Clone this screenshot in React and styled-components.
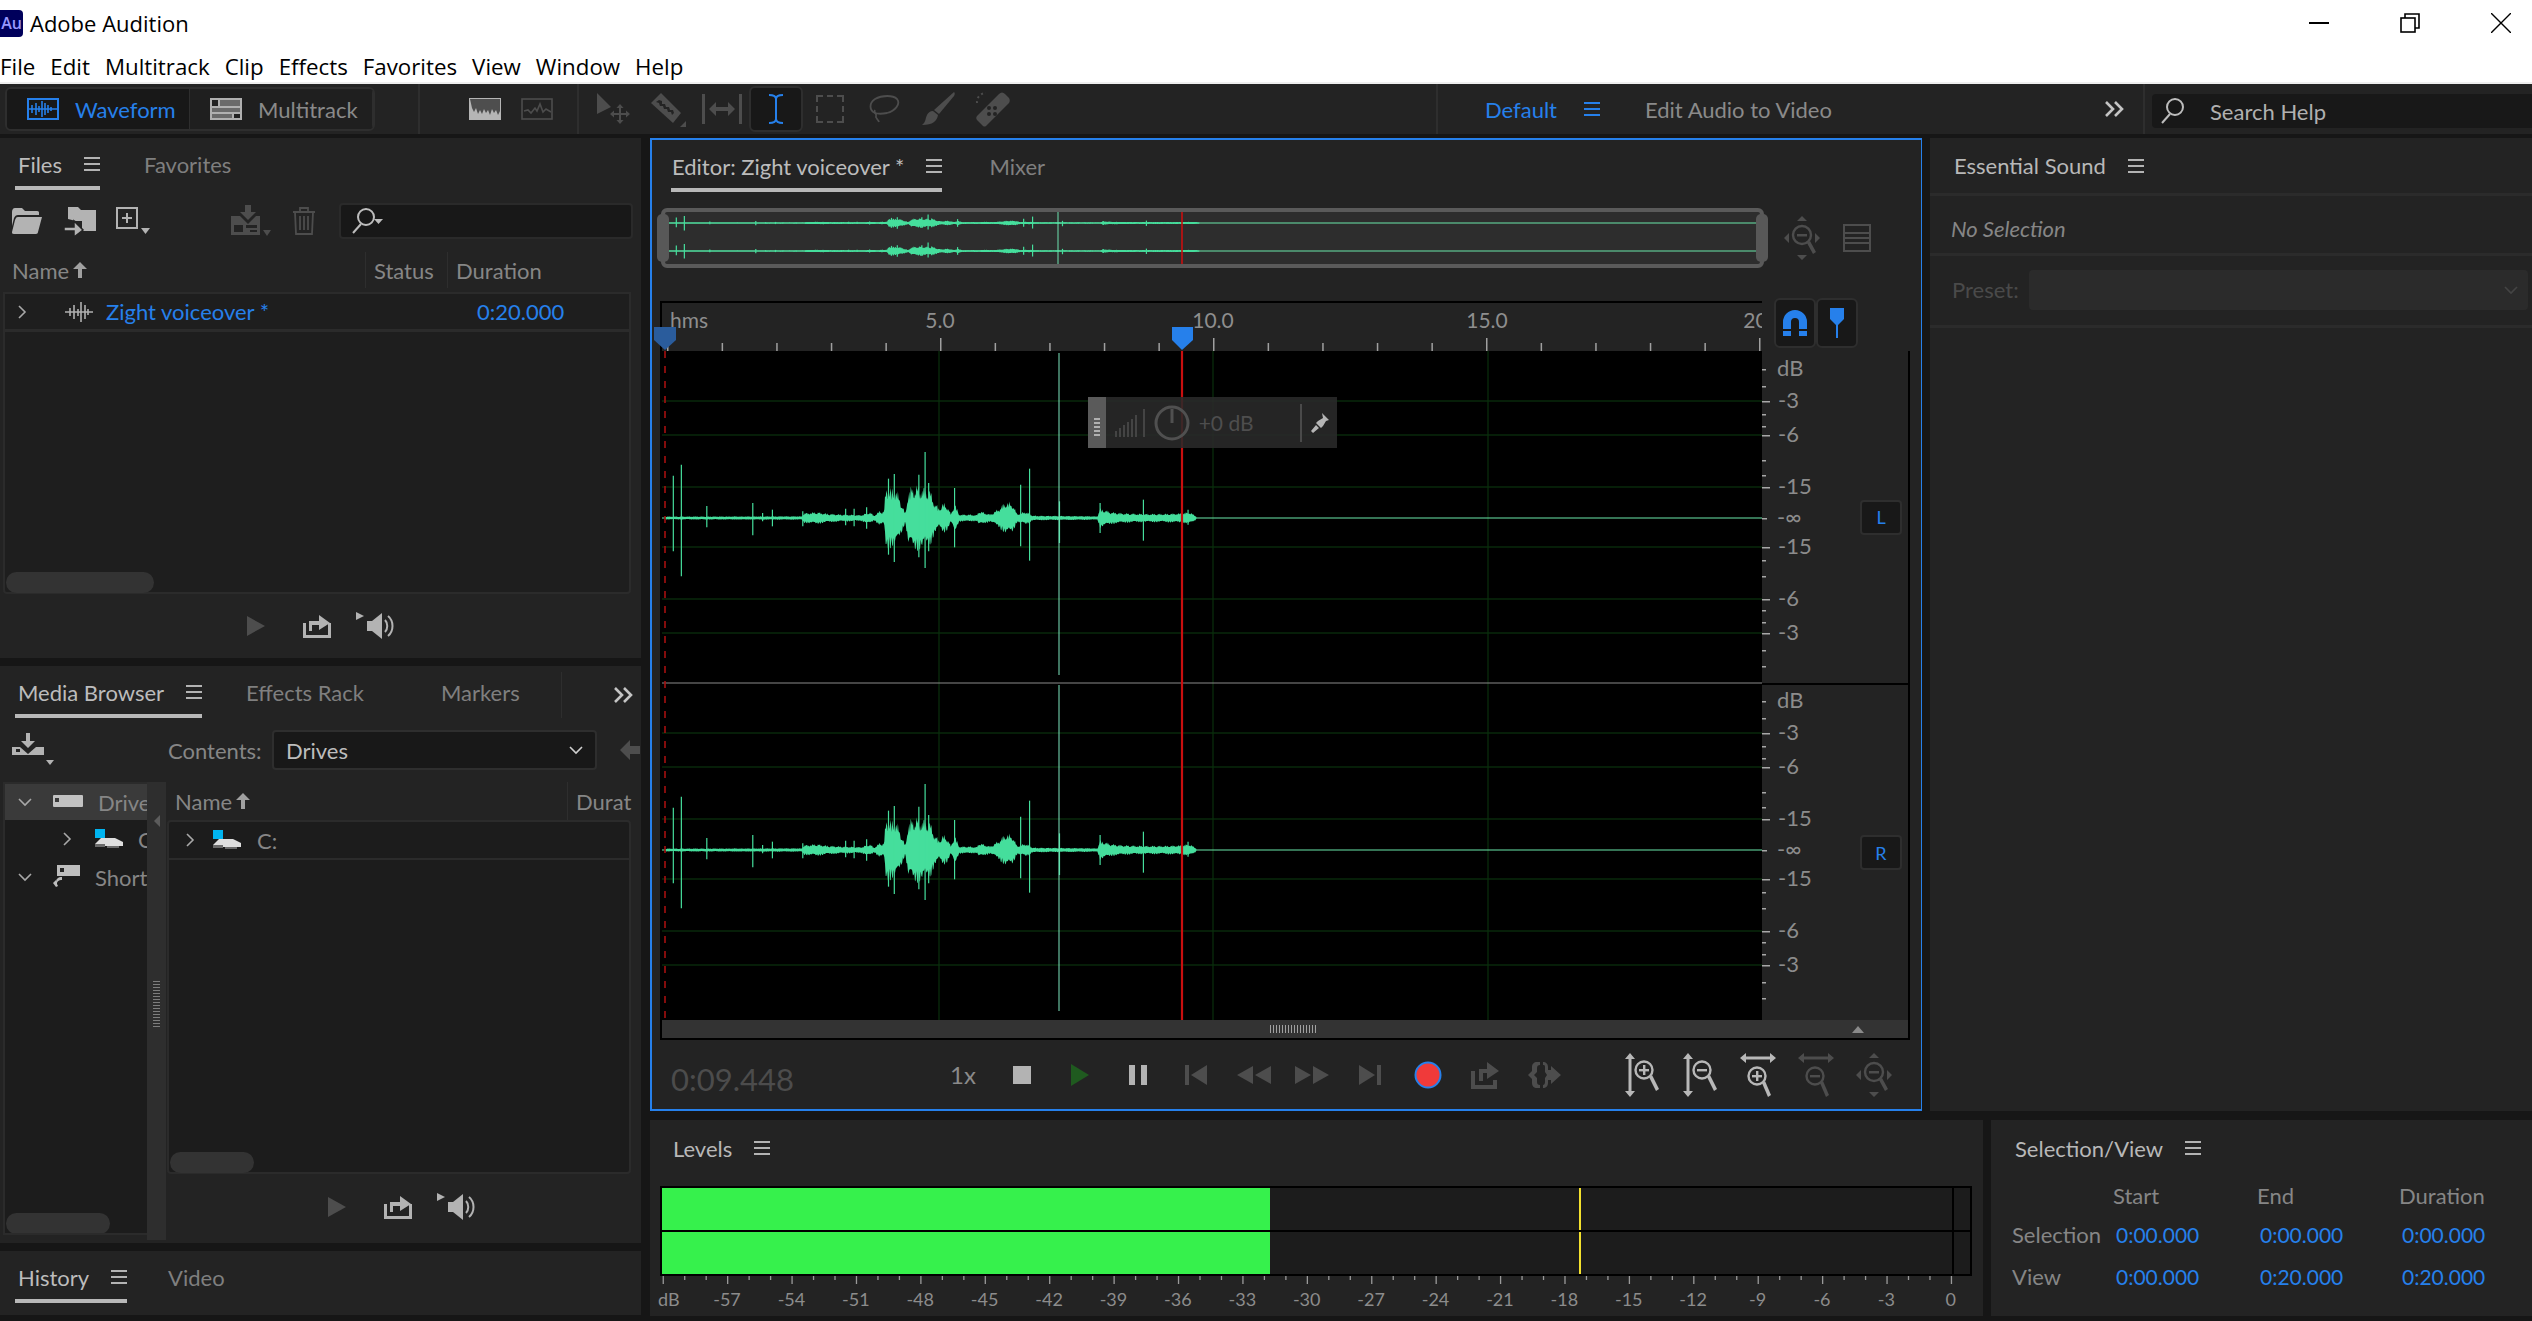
import React from "react";
import styled, { createGlobalStyle } from "styled-components";

const BLUE = "#2680eb";
const LIGHT = "#b3b3b3";
const DIM = "#4d4d4d";

const GlobalStyle = createGlobalStyle`
  html, body { margin: 0; padding: 0; background: #161616; }
  * { box-sizing: border-box; }
`;

// waveform shape, measured as [x, above, below]
const BODY = [
  [33, 3], [338, 4], [342, 14], [370, 18], [400, 12], [430, 10], [470, 8], [490, 18], [500, 6], [512, 22], [522, 20],
  [526, 100], [535, 95], [550, 90], [558, 60], [570, 12], [576, 90], [590, 105], [605, 100], [625, 90], [635, 50],
  [645, 30], [655, 48], [665, 35], [672, 10], [680, 50], [690, 10], [712, 10], [730, 8], [735, 22], [760, 10], [780, 30],
  [795, 52], [810, 45], [820, 12], [840, 20], [855, 6], [1000, 4], [1006, 30], [1030, 18], [1060, 14], [1100, 12],
  [1150, 12], [1190, 14], [1205, 18], [1218, 8], [1222, 1.5],
];
const SPIKES = [
  [50, 127, 100], [68, 160, 175], [125, 36, 28], [228, 45, 52], [250, 15, 10], [272, 25, 25], [340, 20, 25], [436, 28, 22],
  [455, 28, 25], [483, 32, 32], [532, 118, 110], [545, 132, 132], [600, 130, 118], [614, 198, 150], [622, 105, 100],
  [680, 90, 88], [828, 100, 85], [848, 148, 128], [915, 50, 75], [1006, 45, 45], [1103, 55, 68], [1203, 25, 20],
];
const toX = (zx) => zx / 2.24 - 11;

function envelope(px) {
  for (let i = 0; i < BODY.length - 1; i++) {
    const [a, va] = BODY[i];
    const [b, vb] = BODY[i + 1];
    if (px >= a && px <= b) return va + ((vb - va) * (px - a)) / (b - a);
  }
  return 0;
}

function wavePath(cy, scale) {
  const top = [];
  const bottom = [];
  for (let z = 33; z <= 1222; z += 1.6) {
    const noise = 0.55 + 0.45 * Math.abs(Math.sin(z * 12.9898) * Math.cos(z * 4.1414));
    const noise2 = 0.55 + 0.45 * Math.abs(Math.sin(z * 7.233) * Math.cos(z * 9.717));
    const amp = envelope(z) / 3;
    top.push(`${toX(z).toFixed(1)} ${(cy - amp * noise * scale - 0.5).toFixed(1)}`);
    bottom.unshift(`${toX(z).toFixed(1)} ${(cy + amp * noise2 * scale + 0.5).toFixed(1)}`);
  }
  return `M${top.join(" L")} L${bottom.join(" L")} Z`;
}

function Wave({ cy, scale, end }) {
  return (
    <g>
      <line x1="0" x2={end} y1={cy} y2={cy} stroke="#6be8a9" strokeWidth="1.1" />
      <path d={wavePath(cy, scale)} fill="#45de9c" />
      {SPIKES.map(([z, t, b]) => (
        <line key={z} x1={toX(z)} x2={toX(z)} y1={cy - (t / 3) * scale} y2={cy + (b / 3) * scale} stroke="#45de9c" strokeWidth="1.2" />
      ))}
    </g>
  );
}

const Hamburger = ({ color = LIGHT }) => (
  <svg width="16" height="14" viewBox="0 0 16 14">
    <g fill={color}>
      <rect y="0" width="16" height="2" />
      <rect y="6" width="16" height="2" />
      <rect y="12" width="16" height="2" />
    </g>
  </svg>
);

const Chevron = ({ down, color = "#a8a8a8" }) => (
  <svg width="14" height="14" viewBox="0 0 14 14" fill="none" stroke={color} strokeWidth="1.6">
    {down ? <path d="M1 4l6 6 6-6" /> : <path d="M4 1l6 6-6 6" />}
  </svg>
);

const DoubleChevron = () => (
  <svg width="20" height="16" viewBox="0 0 20 16" fill="none" stroke="#c4c4c4" strokeWidth="2.6">
    <path d="M1 1l7 7-7 7M10 1l7 7-7 7" />
  </svg>
);

const WaveModeIcon = () => (
  <svg width="32" height="22" viewBox="0 0 32 22" fill="none" stroke={BLUE} strokeWidth="2">
    <rect x="1" y="1" width="30" height="20" />
    <path d="M1 11h30M5 7v8M9 5v12M12 8v6M15 3v16M18 5v12M21 7v8M24 9v4" strokeWidth="1.6" />
  </svg>
);

const MultiModeIcon = () => (
  <svg width="32" height="22" viewBox="0 0 32 22">
    <rect width="32" height="22" fill="#b0b0b0" />
    <rect x="2" y="2" width="6" height="6" fill="#232323" />
    <rect x="10" y="2" width="20" height="6" fill="#6a6a6a" />
    <rect x="2" y="10" width="28" height="4" fill="#6a6a6a" />
    <rect x="2" y="16" width="20" height="4" fill="#6a6a6a" />
    <rect x="24" y="16" width="6" height="4" fill="#232323" />
  </svg>
);

const SpectralIcon = () => (
  <svg width="32" height="22" viewBox="0 0 32 22">
    <rect width="32" height="22" fill="#b5b5b5" />
    <path d="M1 1h30v12l-2 4-2-5-2 3-2-4-2 6-2-5-2 3-2-4-2 5-2-4-2 4-2-6-2 4-2-4z" fill="#4e4e4e" />
  </svg>
);

const WaveformViewIcon = () => (
  <svg width="32" height="22" viewBox="0 0 32 22" fill="none" stroke={DIM} strokeWidth="1.6">
    <rect x="1" y="1" width="30" height="20" />
    <path d="M3 13l4-1 3 3 4-5 2 3 3-7 3 8 3-3 5 3" />
  </svg>
);

const MoveTool = () => (
  <svg width="36" height="36" viewBox="0 0 36 36" fill={DIM}>
    <path d="M1 2l14 14-14 7z" />
    <path d="M24 13l3.500 4h-2.500v5h5v-2.500l4 3.500-4 3.500v-2.500h-5v5h2.500l-3.500 4-3.500-4h2.500v-5h-5v2.500l-4-3.500 4-3.500v2.500h5v-5h-2.500z" />
  </svg>
);

const RazorTool = () => (
  <svg width="36" height="36" viewBox="0 0 36 36">
    <path d="M1 12l10-10 20 20-8 10z" fill={DIM} />
    <path d="M9 9l3 1 0 3 3 0 1 3 3 0 1 3 3 0 1 3-2 2-1-3-3 0-1-3-3 0-1-3-3 0-1-3-3-1z" fill="#232323" />
    <path d="M36 30v6h-6z" fill={DIM} />
  </svg>
);

const SlipTool = () => (
  <svg width="40" height="30" viewBox="0 0 40 30" fill={DIM}>
    <rect width="3" height="30" />
    <rect x="37" width="3" height="30" />
    <path d="M7 15l7-7v5h12v-5l7 7-7 7v-5h-12v5z" />
  </svg>
);

const IBeamTool = () => (
  <svg width="16" height="30" viewBox="0 0 16 30" fill="none" stroke={BLUE} strokeWidth="2">
    <path d="M1 1c4 0 7 1 7 4v20c0 3-3 4-7 4M15 1c-4 0-7 1-7 4M15 29c-4 0-7-1-7-4" />
  </svg>
);

const MarqueeTool = () => (
  <svg width="28" height="28" viewBox="0 0 28 28" fill="none" stroke={DIM} strokeWidth="2">
    <path d="M1 7v-6h6M11 1h6M21 1h6v6M27 11v6M27 21v6h-6M17 27h-6M7 27h-6v-6M1 17v-6" />
  </svg>
);

const LassoTool = () => (
  <svg width="32" height="30" viewBox="0 0 32 30" fill="none" stroke={DIM} strokeWidth="1.800">
    <path d="M7 19C1 16 1 9 7 5c7-4 18-4 22 0 4 5-2 12-10 14-5 1-9 1-12 0z" />
    <path d="M7 16c-2 3 2 3 1 6-1 2 2 3 3 6" />
  </svg>
);

const BrushTool = () => (
  <svg width="34" height="34" viewBox="0 0 34 34" fill={DIM}>
    <path d="M33 0c1 1 1 2 0 4L18 22l-5-4z" />
    <path d="M12 19l5 4c-1 6-5 10-16 10 4-3 3-6 5-10 1-2 3-4 6-4z" />
  </svg>
);

const HealTool = () => (
  <svg width="36" height="36" viewBox="0 0 36 36">
    <path d="M3 25L25 3c2-2 4-2 6 0l4 4c1 2 1 3 0 5L13 34c-2 2-3 2-5 0l-5-5c-1-1-1-3 0-4z" fill={DIM} />
    <g fill="#232323">
      <circle cx="15" cy="17" r="2" /><circle cx="21" cy="17" r="2" /><circle cx="15" cy="23" r="2" /><circle cx="21" cy="23" r="2" />
    </g>
    <path d="M3 12a9 9 0 0 1 9-10" fill="none" stroke={DIM} strokeWidth="2" strokeDasharray="2 3" />
  </svg>
);

const SearchGlass = ({ caret }) => (
  <svg width="32" height="28" viewBox="0 0 32 28" fill="none" stroke="#bdbdbd" strokeWidth="2">
    <circle cx="15" cy="10" r="8" />
    <path d="M10 17L2 26" />
    {caret && <path d="M23 12h9l-4.500 5z" fill="#bdbdbd" stroke="none" />}
  </svg>
);

const FolderIcon = () => (
  <svg width="30" height="26" viewBox="0 0 30 26" fill={LIGHT}>
    <path d="M0 4c0-2 1-4 3-4h7l3 3h12c2 0 2 1 2 2v2H6c-2 0-3 1-4 3L0 18z" />
    <path d="M6 9h24l-4 15c0 1-1 2-2 2H2c-2 0-2-1-2-2l3-12c1-2 1-3 3-3z" />
  </svg>
);

const ImportFolderIcon = () => (
  <svg width="32" height="32" viewBox="0 0 32 32">
    <path d="M4 2h10l3 3h15v21H18V16h-6l-8-2z" fill={LIGHT} />
    <path d="M4 2v12h4V5h5" fill={LIGHT} />
    <path d="M0 22h10v-6l9 9-9 7v-6H0z" fill={LIGHT} stroke="#232323" strokeWidth="1.500" />
  </svg>
);

const NewFileIcon = () => (
  <svg width="34" height="28" viewBox="0 0 34 28">
    <rect x="1" y="1" width="20" height="20" fill="none" stroke={LIGHT} strokeWidth="2" />
    <path d="M10 6h2v4h4v2h-4v4h-2v-4H6v-2h4z" fill={LIGHT} />
    <path d="M25 21h9l-4.500 6z" fill={LIGHT} />
  </svg>
);

const InsertIcon = () => (
  <svg width="40" height="32" viewBox="0 0 40 32" fill={DIM}>
    <path d="M14 0h6v7h5l-8 8-8-8h5z" />
    <path d="M0 11h9l8 8 8-8h4v19H0zM3 20v7h9v-7zM15 20v3h11v-3zM19 25v2h7v-2z" fillRule="evenodd" />
    <path d="M32 25h8l-4 6z" />
  </svg>
);

const TrashIcon = () => (
  <svg width="22" height="28" viewBox="0 0 22 28" fill="none" stroke={DIM} strokeWidth="1.800">
    <path d="M0 5h22M7 5V1h8v4M2 5l1 22h16l1-22M7 9v14M11 9v14M15 9v14" />
  </svg>
);

const FileWaveIcon = () => (
  <svg width="28" height="22" viewBox="0 0 28 22" fill="none" stroke="#b0b0b0" strokeWidth="1.600">
    <path d="M0 11h28M5 7v8M9 4v14M13 8v7M16 1v20M20 4v14M23 8v6" />
  </svg>
);

const SortArrow = () => (
  <svg width="14" height="16" viewBox="0 0 14 16" fill="#a0a0a0">
    <path d="M7 0l7 7H9v9H5V7H0z" />
  </svg>
);

const PlaySmall = () => (
  <svg width="20" height="20" viewBox="0 0 20 20" fill={DIM}>
    <path d="M1 0l18 10L1 20z" />
  </svg>
);

const LoopSmall = () => (
  <svg width="28" height="24" viewBox="0 0 28 24" fill={LIGHT}>
    <path d="M0 9h3v12h22V9h3v15H0z" />
    <path d="M6 17V7h10V1l11 8-11 7v-5H9v6z" />
  </svg>
);

const SpeakerIcon = () => (
  <svg width="42" height="28" viewBox="0 0 42 28">
    <path d="M0 0l8 4-8 4z" fill={LIGHT} />
    <path d="M11 9h5l10-8v26l-10-8h-5z" fill={LIGHT} />
    <path d="M29 8c3 3 3 9 0 12M32 4c6 5 6 15 0 20" fill="none" stroke={LIGHT} strokeWidth="2" />
  </svg>
);

const ImportIcon = () => (
  <svg width="44" height="34" viewBox="0 0 44 34" fill={LIGHT}>
    <path d="M14 0h4v8h5l-7 7-7-7h5z" />
    <path d="M0 14h8l8 7 8-7h8v8H0zM4 16v3h4v-3z" fillRule="evenodd" />
    <path d="M34 27h8l-4 5z" />
  </svg>
);

const DriveIcon = () => (
  <svg width="30" height="14" viewBox="0 0 30 14">
    <rect width="30" height="12" rx="1" fill="#c2c2c2" />
    <rect x="2" y="3" width="4" height="4" fill="#3a3a3a" />
  </svg>
);

const LocalDiskIcon = () => (
  <svg width="28" height="20" viewBox="0 0 28 20">
    <rect width="10" height="9" fill="#00b4f0" />
    <path d="M6 9l14 0 8 4v4H10l-10-2z" fill="#dedede" />
    <path d="M0 15h10v3H0zM12 17h12v2H12z" fill="#6b6b6b" />
  </svg>
);

const ShortcutIcon = () => (
  <svg width="27" height="24" viewBox="0 0 27 24">
    <rect x="4" width="23" height="11" fill="#bdbdbd" />
    <rect x="7" y="3" width="4" height="4" fill="#232323" />
    <path d="M9 12c-4 0-6 2-6 5v-2l-3 3 3 4 2-1-1-2c0-3 2-4 5-4z" fill="#bdbdbd" />
  </svg>
);

const BackArrow = () => (
  <svg width="20" height="20" viewBox="0 0 20 20" fill={DIM}>
    <path d="M0 10l10-10v6h10v8H10v6z" />
  </svg>
);

const MagnetIcon = () => (
  <svg width="24" height="26" viewBox="0 0 24 26">
    <path d="M0 26V12a12 12 0 0 1 24 0v14h-8V12a4 4 0 0 0-8 0v14z" fill={BLUE} />
    <path d="M0 19h8v2H0zM16 19h8v2h-8z" fill="#181818" />
  </svg>
);

const MarkerPinIcon = () => (
  <svg width="14" height="30" viewBox="0 0 14 30" fill={BLUE}>
    <path d="M0 0h14v11l-6 6v13H6V17l-6-6z" />
  </svg>
);

const ZoomFullIcon = ({ color = DIM }) => (
  <svg width="36" height="44" viewBox="0 0 36 44" fill={color}>
    <path d="M18 0l5 5H13zM18 44l-5-5h10zM0 22l5-5v10zM36 22l-5 5V17z" />
    <circle cx="18" cy="19" r="9" fill="none" stroke={color} strokeWidth="2.400" />
    <path d="M13 18h10v2.500H13z" />
    <path d="M23 27l3-2 6 11-3 2z" />
  </svg>
);

const StackIcon = () => (
  <svg width="28" height="28" viewBox="0 0 28 28" fill="none" stroke={DIM} strokeWidth="2">
    <rect x="1" y="1" width="26" height="26" />
    <path d="M1 9h26M1 14h26M1 19h26" />
  </svg>
);

const VZoomIcon = ({ minus }) => (
  <svg width="34" height="44" viewBox="0 0 34 44" fill="#b8b8b8">
    <path d="M5 0l5 6H6.500v32H10l-5 6-5-6h3.500V6H0z" />
    <circle cx="19" cy="17" r="8.500" fill="none" stroke="#b8b8b8" strokeWidth="2.400" />
    <path d="M14 16h10v2.400H14z" />
    {!minus && <path d="M18 12h2.400v10H18z" />}
    <path d="M24 24l3-2 7 14-3 2z" />
  </svg>
);

const HZoomIcon = ({ minus, color = "#b8b8b8" }) => (
  <svg width="36" height="44" viewBox="0 0 36 44" fill={color}>
    <path d="M0 5l6-5v3.500h24V0l6 5-6 5V6.500H6V10z" />
    <circle cx="17" cy="23" r="8.500" fill="none" stroke={color} strokeWidth="2.400" />
    <path d="M12 22h10v2.400H12z" />
    {!minus && <path d="M16 18h2.400v10H16z" />}
    <path d="M22 30l3-2 6 14-3 2z" />
  </svg>
);

const TransportIcons = {
  stop: <svg width="18" height="18"><rect width="18" height="18" fill={LIGHT} /></svg>,
  play: <svg width="18" height="22" viewBox="0 0 18 22"><path d="M0 0l18 11L0 22z" fill="#1f5a1f" /></svg>,
  pause: <svg width="18" height="20" viewBox="0 0 18 20" fill={LIGHT}><rect width="6" height="20" /><rect x="12" width="6" height="20" /></svg>,
  prev: <svg width="22" height="20" viewBox="0 0 22 20" fill={DIM}><rect width="4" height="20" /><path d="M22 0v20L6 10z" /></svg>,
  rew: <svg width="34" height="18" viewBox="0 0 34 18" fill={DIM}><path d="M16 0v18L0 9zM34 0v18L18 9z" /></svg>,
  ff: <svg width="34" height="18" viewBox="0 0 34 18" fill={DIM}><path d="M0 0v18l16-9zM18 0v18l16-9z" /></svg>,
  next: <svg width="22" height="20" viewBox="0 0 22 20" fill={DIM}><path d="M0 0v20l16-10z" /><rect x="18" width="4" height="20" /></svg>,
  record: (
    <svg width="28" height="28" viewBox="0 0 28 28">
      <circle cx="14" cy="14" r="12.500" fill="#f03a3a" stroke={BLUE} strokeWidth="2" />
    </svg>
  ),
  loop: (
    <svg width="30" height="28" viewBox="0 0 30 28" fill={DIM}>
      <path d="M0 10h4v14h18v-5h4v9H0z" />
      <path d="M8 20V8h8V1l12 9-12 8v-6h-4v8z" />
    </svg>
  ),
  skip: (
    <svg width="34" height="26" viewBox="0 0 34 26" fill={DIM}>
      <path d="M10 0h3v3c-2 0-3 1-3 3v4l-3 3 3 3v4c0 2 1 3 3 3v3h-3c-3 0-5-2-5-5v-4l-4-4 4-4V5c0-3 2-5 5-5z" />
      <path d="M16 0c3 0 5 2 5 5v3h3v-4l10 9-10 9v-4h-3v3c0 3-2 5-5 5v-3c1 0 2-1 2-3v-4l2-3-2-3V5c0-2-1-2-2-2z" />
    </svg>
  ),
};

const dbMajor = [[50, "-3"], [84, "-6"], [136, "-15"], [196, "-15"], [248, "-6"], [282, "-3"]];
const dbMinor = [18, 35, 63, 75, 109, 124, 209, 225, 259, 271, 299, 315];

function DbScale() {
  return (
    <svg width="60" height="332" viewBox="0 0 60 332">
      <g fill="#a8a8a8">
        {dbMinor.map((y) => <rect key={y} x="0" y={y} width="4" height="1.500" />)}
        {dbMajor.map(([y]) => <rect key={y} x="0" y={y} width="8" height="1.500" />)}
        <rect x="0" y="167" width="5" height="1.500" />
      </g>
      <g fill="#8c8c8c" fontFamily="Lato, sans-serif" fontSize="22">
        <text x="15" y="25">dB</text>
        {dbMajor.map(([y, t]) => <text key={y} x="16" y={y + 7}>{t}</text>)}
        <text x="15" y="174">-∞</text>
      </g>
    </svg>
  );
}

function TrackCanvas() {
  const hLines = [50, 84, 136, 196, 248, 282, 382, 416, 468, 528, 580, 614];
  const vLines = [277, 551, 826];
  return (
    <svg width="1100" height="669" viewBox="0 0 1100 669">
      <rect width="1100" height="669" fill="#000" />
      <g stroke="#0c3c10" strokeWidth="1.200">
        {hLines.map((y) => <line key={y} x1="0" x2="1100" y1={y} y2={y} />)}
      </g>
      <g stroke="#0a300d" strokeWidth="1.200">
        {vLines.map((x) => <line key={x} x1={x} x2={x} y1="0" y2="669" />)}
      </g>
      <line x1="0" x2="1100" y1="332" y2="332" stroke="#8a8a8a" strokeWidth="1" />
      <Wave cy={167} scale={1} end={1100} />
      <Wave cy={499} scale={1} end={1100} />
      <path d="M397 2v322M397 334v326" stroke="#7fe8c0" strokeWidth="1" />
      <line x1="3" x2="3" y1="0" y2="669" stroke="#a50f0f" strokeWidth="1.600" strokeDasharray="7 8" />
      <line x1="520" x2="520" y1="0" y2="669" stroke="#c90f0f" strokeWidth="2.200" />
    </svg>
  );
}

function TimeRuler() {
  const ticks = Array.from({ length: 21 }, (_, i) => i);
  const labels = [[278, "5.0"], [551, "10.0"], [825, "15.0"], [1102, "20.0"]];
  return (
    <RulerSvg width="1100" height="48" viewBox="0 0 1100 48">
      <svg width="1100" height="48">
        <g fill="#a0a0a0">
          {ticks.map((t) => (
            <rect key={t} x={5 + t * 54.6} y={t % 5 === 0 ? 35 : 40} width="1.500" height={t % 5 === 0 ? 13 : 8} />
          ))}
        </g>
        <g fill="#8e8e8e" fontFamily="Lato, sans-serif" fontSize="21">
          <text x="8" y="25">hms</text>
          {labels.map(([x, s]) => <text key={s} x={x} y="25" textAnchor="middle">{s}</text>)}
        </g>
      </svg>
      <path d="M-8 24h22v13L3 47-8 37z" fill="#2a5c9c" />
      <path d="M510 24h21v13L520 47 510 37z" fill={BLUE} />
    </RulerSvg>
  );
}

function LevelScale() {
  const x = (db) => 2.6 + (db + 60) * 21.47;
  const ticks = Array.from({ length: 61 }, (_, i) => i - 60);
  const labels = Array.from({ length: 20 }, (_, i) => -57 + i * 3);
  return (
    <LevelScaleSvg width="1320" height="42" viewBox="0 0 1320 42">
      <g fill="#9a9a9a">
        {ticks.map((d) => (
          <rect key={d} x={x(d)} y="0" width="1.300" height={d % 3 === 0 ? 8 : 4} />
        ))}
      </g>
      <g fill="#8c8c8c" fontFamily="Lato, sans-serif" fontSize="18">
        <text x="-2" y="30">dB</text>
        {labels.map((d) => <text key={d} x={x(d)} y="30" textAnchor="middle">{d}</text>)}
      </g>
    </LevelScaleSvg>
  );
}

export default function App() {
  return (
    <Page>
      <GlobalStyle />
      <TitleBar>
        <Logo>Au</Logo>
        <AppName>Adobe Audition</AppName>
        <WindowControls>
          <svg width="20" height="2"><rect width="20" height="2" fill="#000" /></svg>
          <svg width="20" height="20" viewBox="0 0 20 20" fill="none" stroke="#000" strokeWidth="1.600">
            <rect x="1" y="5" width="14" height="14" />
            <path d="M5 5V1h14v14h-4" />
          </svg>
          <svg width="20" height="20" viewBox="0 0 20 20" stroke="#000" strokeWidth="1.400">
            <path d="M0 0l20 20M20 0L0 20" />
          </svg>
        </WindowControls>
      </TitleBar>
      <MenuBar>
        {["File", "Edit", "Multitrack", "Clip", "Effects", "Favorites", "View", "Window", "Help"].map((m) => (
          <span key={m}>{m}</span>
        ))}
      </MenuBar>

      <Toolbar>
        <ModeGroup>
          <ModeButton $active>
            <WaveModeIcon />
            Waveform
          </ModeButton>
          <ModeButton>
            <MultiModeIcon />
            Multitrack
          </ModeButton>
        </ModeGroup>
        <BarDivider $ml={43} />
        <ViewIcons>
          <SpectralIcon />
          <WaveformViewIcon />
        </ViewIcons>
        <BarDivider $ml={24} />
        <ToolSet>
          <ToolSlot><MoveTool /></ToolSlot>
          <ToolSlot><RazorTool /></ToolSlot>
          <ToolSlot><SlipTool /></ToolSlot>
          <ToolSlot $active><IBeamTool /></ToolSlot>
          <ToolSlot><MarqueeTool /></ToolSlot>
          <ToolSlot><LassoTool /></ToolSlot>
          <ToolSlot><BrushTool /></ToolSlot>
          <ToolSlot><HealTool /></ToolSlot>
        </ToolSet>
        <BarDivider $ml={417} />
        <WorkspaceName $active $ml={47}>Default</WorkspaceName>
        <HamburgerSlot $ml={27}><Hamburger color={BLUE} /></HamburgerSlot>
        <WorkspaceName $ml={45}>Edit Audio to Video</WorkspaceName>
        <Overflow>
          <DoubleChevron />
        </Overflow>
        <BarDivider $ml={18} />
        <SearchHelp>
          <SearchGlass />
          Search Help
        </SearchHelp>
      </Toolbar>

      <Workspace>
        <LeftColumn>
          <Panel $h={520}>
            <TabBar>
              <Tab $active>Files<Hamburger /></Tab>
              <Tab $ml={41}>Favorites</Tab>
            </TabBar>
            <FilesTools>
              <IconSlot><FolderIcon /></IconSlot>
              <IconSlot><ImportFolderIcon /></IconSlot>
              <IconSlot><NewFileIcon /></IconSlot>
              <IconSlot $ml={65}><InsertIcon /></IconSlot>
              <IconSlot><TrashIcon /></IconSlot>
              <SearchField><SearchGlass caret /></SearchField>
            </FilesTools>
            <FilesHead>
              <HeadCell $w={362}>Name <SortArrow /></HeadCell>
              <HeadCell $w={82} $line>Status</HeadCell>
              <HeadCell $line>Duration</HeadCell>
            </FilesHead>
            <FilesBody>
              <FileRow>
                <RowChevron><Chevron /></RowChevron>
                <FileWaveIcon />
                <FileName>Zight voiceover *</FileName>
                <FileDuration>0:20.000</FileDuration>
              </FileRow>
              <ScrollThumb $w={148} />
            </FilesBody>
            <MiniTransport $pl={246}>
              <PlaySmall />
              <LoopSmall />
              <SpeakerIcon />
            </MiniTransport>
          </Panel>

          <Panel $h={577}>
            <TabBar>
              <Tab $active>Media Browser<Hamburger /></Tab>
              <Tab $ml={41}>Effects Rack</Tab>
              <Tab $ml={74}>Markers</Tab>
              <TabDivider />
              <TabOverflow><DoubleChevron /></TabOverflow>
            </TabBar>
            <MediaTools>
              <ImportIcon />
              <ContentsLabel>Contents:</ContentsLabel>
              <ContentsSelect>
                Drives
                <Chevron down color="#cfcfcf" />
              </ContentsSelect>
              <BackSlot><BackArrow /></BackSlot>
            </MediaTools>
            <MediaSplit>
              <TreePane>
                <TreeRow $selected>
                  <Chevron down />
                  <DriveIcon />
                  <TreeLabel>Drives</TreeLabel>
                </TreeRow>
                <TreeRow $indent={55}>
                  <Chevron />
                  <LocalDiskIcon />
                  <TreeLabel>C:</TreeLabel>
                </TreeRow>
                <TreeRow>
                  <Chevron down />
                  <ShortcutIcon />
                  <TreeLabel>Shortcuts</TreeLabel>
                </TreeRow>
                <ScrollThumb $w={104} />
              </TreePane>
              <Splitter>
                <SplitArrow />
                <SplitGrip />
              </Splitter>
              <ListPane>
                <ListHead>
                  <HeadCell $w={401}>Name <SortArrow /></HeadCell>
                  <HeadCell $line>Durat</HeadCell>
                </ListHead>
                <ListBody>
                  <ListRow>
                    <Chevron />
                    <LocalDiskIcon />
                    <TreeLabel>C:</TreeLabel>
                  </ListRow>
                  <ScrollThumb $w={84} />
                </ListBody>
                <MiniTransport $pl={161} $h={66}>
                  <PlaySmall />
                  <LoopSmall />
                  <SpeakerIcon />
                </MiniTransport>
              </ListPane>
            </MediaSplit>
          </Panel>

          <Panel $h={64}>
            <TabBar>
              <Tab $active>History<Hamburger /></Tab>
              <Tab $ml={38}>Video</Tab>
            </TabBar>
          </Panel>
        </LeftColumn>

        <MainColumn>
          <TopRow>
            <EditorPanel>
              <TabBar>
                <Tab $active $ml={19} $pl={1}>Editor: Zight voiceover *<Hamburger /></Tab>
                <Tab>Mixer</Tab>
              </TabBar>
              <OverviewRow>
                <Overview>
                  <svg width="1095" height="52" viewBox="0 0 1095 52">
                    <Wave cy={11} scale={0.13} end={1095} />
                    <Wave cy={39} scale={0.13} end={1095} />
                    <path d="M393 0v52" stroke="#6fe3b0" strokeWidth="1" />
                    <path d="M517 0v52" stroke="#c90f0f" strokeWidth="1.600" />
                  </svg>
                  <OverviewHandle $side="left" />
                  <OverviewHandle $side="right" />
                </Overview>
                <ZoomFullSlot><ZoomFullIcon /></ZoomFullSlot>
                <StackIcon />
              </OverviewRow>
              <RulerRow>
                <RulerBox><TimeRuler /></RulerBox>
                <SnapButtons>
                  <SnapButton><MagnetIcon /></SnapButton>
                  <SnapButton><MarkerPinIcon /></SnapButton>
                </SnapButtons>
              </RulerRow>
              <TrackFrame>
                <TrackMain>
                  <TrackCanvas />
                  <Hud>
                    <HudGrip />
                    <svg width="30" height="28" viewBox="0 0 30 28" fill="#444">
                      <rect x="0" y="22" width="2" height="6" /><rect x="4" y="19" width="2" height="9" />
                      <rect x="8" y="16" width="2" height="12" /><rect x="12" y="13" width="2" height="15" />
                      <rect x="16" y="10" width="2" height="18" /><rect x="20" y="6" width="2" height="22" />
                      <rect x="28" y="0" width="2" height="28" />
                    </svg>
                    <svg width="36" height="36" viewBox="0 0 36 36" fill="none" stroke="#505050" strokeWidth="3">
                      <circle cx="18" cy="18" r="16" />
                      <path d="M18 4v14" />
                    </svg>
                    <HudValue>+0 dB</HudValue>
                    <HudDivider />
                    <svg width="18" height="20" viewBox="0 0 18 20" fill="#b5b5b5">
                      <path d="M11 0l7 7-3 1-3 5-2 2-5-5 2-2 5-3zM5 12l3 3-6 5-2-2z" />
                    </svg>
                  </Hud>
                </TrackMain>
                <ScaleColumn>
                  <ChannelScale $h={332}>
                    <DbScale />
                    <ChannelButton>L</ChannelButton>
                  </ChannelScale>
                  <ChannelScale $h={337} $second>
                    <DbScale />
                    <ChannelButton>R</ChannelButton>
                  </ChannelScale>
                </ScaleColumn>
                <TrackScrollbar>
                  <ScrollGrip />
                  <ScrollUp />
                </TrackScrollbar>
              </TrackFrame>
              <TransportBar>
                <TimeDisplay>0:09.448</TimeDisplay>
                <SpeedLabel>1x</SpeedLabel>
                {Object.keys(TransportIcons).map((k) => (
                  <TransportSlot key={k}>{TransportIcons[k]}</TransportSlot>
                ))}
                <ZoomGroup>
                  <TransportSlot><VZoomIcon /></TransportSlot>
                  <TransportSlot><VZoomIcon minus /></TransportSlot>
                  <TransportSlot><HZoomIcon /></TransportSlot>
                  <TransportSlot><HZoomIcon minus color={DIM} /></TransportSlot>
                  <TransportSlot><ZoomFullIcon /></TransportSlot>
                </ZoomGroup>
              </TransportBar>
            </EditorPanel>

            <EssentialPanel>
              <EssentialHead>Essential Sound<Hamburger /></EssentialHead>
              <EssentialNote>No Selection</EssentialNote>
              <PresetRow>
                <PresetLabel>Preset:</PresetLabel>
                <PresetSelect><Chevron down color="#444" /></PresetSelect>
              </PresetRow>
            </EssentialPanel>
          </TopRow>

          <BottomRow>
            <LevelsPanel>
              <PanelTitle>Levels<Hamburger /></PanelTitle>
              <MeterBox>
                <MeterChannels>
                  <MeterChannel><MeterFill $w={608} /><MeterPeak /></MeterChannel>
                  <MeterChannel><MeterFill $w={608} /><MeterPeak /></MeterChannel>
                </MeterChannels>
                <ClipLights>
                  <ClipLight />
                  <ClipLight />
                </ClipLights>
              </MeterBox>
              <LevelScale />
            </LevelsPanel>
            <SelectionPanel>
              <PanelTitle $ml={24}>Selection/View<Hamburger /></PanelTitle>
              <SelectionGrid>
                <span />
                <ColHead>Start</ColHead>
                <ColHead>End</ColHead>
                <ColHead>Duration</ColHead>
                <RowHead>Selection</RowHead>
                <TimeValue>0:00.000</TimeValue>
                <TimeValue>0:00.000</TimeValue>
                <TimeValue>0:00.000</TimeValue>
                <RowHead>View</RowHead>
                <TimeValue>0:00.000</TimeValue>
                <TimeValue>0:20.000</TimeValue>
                <TimeValue>0:20.000</TimeValue>
              </SelectionGrid>
            </SelectionPanel>
          </BottomRow>
        </MainColumn>
      </Workspace>
    </Page>
  );
}

const Page = styled.div`
  width: 2532px;
  height: 1321px;
  overflow: hidden;
  background: #161616;
  font-family: Lato, "Open Sans", sans-serif;
  font-size: 22px;
  color: #b8b8b8;
  svg { flex: none; }
`;

const TitleBar = styled.div`
  height: 46px;
  background: #fff;
  display: flex;
  align-items: center;
  color: #000;
  font-family: "Open Sans", sans-serif;
`;

const Logo = styled.div`
  width: 23px;
  height: 27px;
  background: #00005b;
  color: #9999ff;
  border-radius: 0 4px 4px 0;
  font-size: 16px;
  font-weight: 600;
  display: flex;
  align-items: center;
  justify-content: center;
`;

const AppName = styled.span`
  margin-left: 7px;
  font-size: 22px;
`;

const WindowControls = styled.div`
  margin-left: auto;
  display: flex;
  align-items: center;
  gap: 71px;
  padding-right: 21px;
`;

const MenuBar = styled.div`
  height: 38px;
  background: #fff;
  border-bottom: 2px solid #eee;
  display: flex;
  align-items: flex-start;
  gap: 15px;
  color: #000;
  font-family: "Open Sans", sans-serif;
  font-size: 22.3px;
  line-height: 36px;
  padding-top: 3px;
`;

const Toolbar = styled.div`
  height: 50px;
  background: #232323;
  display: flex;
  align-items: center;
`;

const ModeGroup = styled.div`
  margin-left: 5px;
  width: 370px;
  height: 44px;
  display: flex;
  border: 2px solid #2e2e2e;
  border-radius: 6px;
  overflow: hidden;
`;

const ModeButton = styled.div`
  flex: 1;
  display: flex;
  align-items: center;
  gap: 16px;
  padding-left: 20px;
  background: ${(p) => (p.$active ? "#181818" : "#1f1f1f")};
  color: ${(p) => (p.$active ? BLUE : "#8a8a8a")};
  border-right: 1px solid #2e2e2e;
`;

const BarDivider = styled.div`
  margin-left: ${(p) => p.$ml}px;
  width: 2px;
  height: 100%;
  background: #2e2e2e;
`;

const ViewIcons = styled.div`
  margin-left: 49px;
  display: flex;
  gap: 20px;
`;

const ToolSet = styled.div`
  margin-left: 8px;
  display: flex;
`;

const ToolSlot = styled.div`
  width: 54px;
  height: 46px;
  display: flex;
  align-items: center;
  justify-content: center;
  background: ${(p) => (p.$active ? "#181818" : "transparent")};
  border: ${(p) => (p.$active ? "2px solid #2e2e2e" : "none")};
  border-radius: 6px;
`;

const WorkspaceName = styled.span`
  margin-left: ${(p) => p.$ml}px;
  color: ${(p) => (p.$active ? BLUE : "#8a8a8a")};
`;

const HamburgerSlot = styled.span`
  margin-left: ${(p) => p.$ml}px;
  display: flex;
`;

const Overflow = styled.span`
  margin-left: auto;
  display: flex;
`;

const SearchHelp = styled.div`
  margin-left: 7px;
  margin-top: 4px;
  width: 380px;
  height: 34px;
  background: #181818;
  border-radius: 4px 0 0 4px;
  display: flex;
  align-items: center;
  gap: 18px;
  padding-left: 8px;
  color: #b0b0b0;
`;

const Workspace = styled.div`
  margin-top: 4px;
  display: flex;
  gap: 9px;
`;

const LeftColumn = styled.div`
  width: 641px;
  display: flex;
  flex-direction: column;
  gap: 8px;
`;

const Panel = styled.section`
  height: ${(p) => p.$h}px;
  background: #232323;
  display: flex;
  flex-direction: column;
`;

const TabBar = styled.div`
  height: 52px;
  flex: none;
  display: flex;
  align-items: flex-end;
  position: relative;
  white-space: nowrap;
`;

const Tab = styled.div`
  height: 46px;
  margin-left: ${(p) => (p.$ml ? p.$ml : p.$active ? 15 : 44)}px;
  padding: 0 0 2px ${(p) => p.$pl ?? 3}px;
  display: flex;
  align-items: center;
  gap: 22px;
  color: ${(p) => (p.$active ? "#bcbcbc" : "#7f7f7f")};
  border-bottom: 4px solid ${(p) => (p.$active ? "#b8b8b8" : "transparent")};
`;

const TabDivider = styled.div`
  width: 1px;
  height: 46px;
  background: #2e2e2e;
  margin-left: 41px;
`;

const TabOverflow = styled.div`
  margin-left: 52px;
  height: 46px;
  display: flex;
  align-items: center;
`;

const FilesTools = styled.div`
  height: 62px;
  flex: none;
  display: flex;
  align-items: center;
`;

const IconSlot = styled.div`
  width: 53px;
  margin-left: ${(p) => p.$ml || 0}px;
  display: flex;
  justify-content: center;
`;

const SearchField = styled.div`
  margin-left: 9px;
  width: 294px;
  height: 36px;
  background: #181818;
  border: 2px solid #2a2a2a;
  border-radius: 4px;
  display: flex;
  align-items: center;
  padding-left: 10px;
`;

const FilesHead = styled.div`
  height: 40px;
  flex: none;
  margin-left: 3px;
  padding-bottom: 4px;
  display: flex;
  color: #868686;
`;

const HeadCell = styled.div`
  width: ${(p) => (p.$w ? `${p.$w}px` : "auto")};
  display: flex;
  align-items: center;
  gap: 4px;
  padding-left: ${(p) => (p.$line ? 8 : 9)}px;
  border-left: ${(p) => (p.$line ? "1px solid #2e2e2e" : "none")};
`;

const FilesBody = styled.div`
  position: relative;
  flex: 1;
  margin: 0 10px 0 3px;
  background: #1e1e1e;
  border: 2px solid #2b2b2b;
  border-bottom-left-radius: 4px;
  border-bottom-right-radius: 4px;
`;

const FileRow = styled.div`
  height: 38px;
  display: flex;
  align-items: center;
  border-bottom: 3px solid #2b2b2b;
  padding-left: 10px;
  color: ${BLUE};
`;

const RowChevron = styled.span`
  display: flex;
  width: 50px;
`;

const FileName = styled.span`
  margin-left: 13px;
  width: 371px;
`;

const FileDuration = styled.span``;

const ScrollThumb = styled.div`
  position: absolute;
  left: 1px;
  bottom: -1px;
  width: ${(p) => p.$w}px;
  height: 21px;
  border-radius: 11px;
  background: #333;
`;

const MiniTransport = styled.div`
  height: ${(p) => p.$h || 64}px;
  flex: none;
  display: flex;
  align-items: center;
  padding-left: ${(p) => p.$pl}px;
  gap: 37px;
  svg:last-child { margin-left: -12px; }
`;

const MediaTools = styled.div`
  height: 64px;
  flex: none;
  display: flex;
  align-items: center;
  padding-left: 12px;
`;

const ContentsLabel = styled.span`
  margin-left: 112px;
  width: 104px;
  color: #868686;
`;

const ContentsSelect = styled.div`
  width: 325px;
  height: 40px;
  background: #181818;
  border: 2px solid #2e2e2e;
  border-radius: 4px;
  color: #bdbdbd;
  padding: 0 12px;
  display: flex;
  align-items: center;
  justify-content: space-between;
`;

const BackSlot = styled.span`
  margin-left: 23px;
  display: flex;
`;

const MediaSplit = styled.div`
  flex: 1;
  display: flex;
  min-height: 0;
  margin-bottom: 3px;
`;

const TreePane = styled.div`
  position: relative;
  margin-left: 3px;
  margin-bottom: 5px;
  width: 144px;
  background: #1c1c1c;
  border: 2px solid #2b2b2b;
  border-right: none;
  overflow: hidden;
  color: #868686;
`;

const TreeRow = styled.div`
  height: ${(p) => (p.$selected ? 36 : 38)}px;
  padding-left: ${(p) => p.$indent || 13}px;
  display: flex;
  align-items: center;
  gap: 15px;
  white-space: nowrap;
  background: ${(p) => (p.$selected ? "#3a3a3a" : "transparent")};
  svg:first-child { margin-right: 6px; }
`;

const TreeLabel = styled.span`
  color: #868686;
`;

const Splitter = styled.div`
  width: 19px;
  background: #2e2e2e;
  display: flex;
  flex-direction: column;
  align-items: center;
  padding-top: 33px;
`;

const SplitArrow = styled.div`
  width: 0;
  height: 0;
  border-top: 6px solid transparent;
  border-bottom: 6px solid transparent;
  border-right: 6px solid #5c5c5c;
`;

const SplitGrip = styled.div`
  margin-top: 154px;
  width: 7px;
  height: 46px;
  background: repeating-linear-gradient(0deg, #7d7d7d 0 1px, transparent 1px 3px);
`;

const ListPane = styled.div`
  flex: 1;
  display: flex;
  flex-direction: column;
`;

const ListHead = styled.div`
  height: 38px;
  flex: none;
  display: flex;
  color: #868686;
`;

const ListBody = styled.div`
  position: relative;
  flex: 1;
  margin: 0 10px 0 1px;
  background: #1c1c1c;
  border: 2px solid #2b2b2b;
  border-radius: 4px;
`;

const ListRow = styled.div`
  height: 38px;
  padding-left: 14px;
  display: flex;
  align-items: center;
  gap: 16px;
  border-bottom: 2px solid #2b2b2b;
`;

const MainColumn = styled.div`
  flex: 1;
  display: flex;
  flex-direction: column;
  gap: 9px;
`;

const TopRow = styled.div`
  height: 973px;
  display: flex;
  gap: 8px;
`;

const EditorPanel = styled.section`
  width: 1272px;
  background: #232323;
  border: 2px solid ${BLUE};
  border-right-width: 1px;
  display: flex;
  flex-direction: column;
`;

const OverviewRow = styled.div`
  margin-top: 16px;
  padding-left: 9px;
  display: flex;
  align-items: center;
`;

const Overview = styled.div`
  position: relative;
  width: 1103px;
  height: 60px;
  background: #2d2d2d;
  border: 4px solid #5a5a5a;
  border-radius: 6px;
`;

const OverviewHandle = styled.div`
  position: absolute;
  top: 2px;
  ${(p) => p.$side}: -8px;
  width: 12px;
  height: 48px;
  border-radius: 5px;
  background: #585858;
`;

const ZoomFullSlot = styled.div`
  margin-left: 20px;
  margin-right: 23px;
  display: flex;
`;

const RulerRow = styled.div`
  margin-top: 33px;
  padding-left: 8px;
  display: flex;
  height: 50px;
`;

const RulerBox = styled.div`
  width: 1102px;
  border-top: 2px solid #000;
  border-left: 2px solid #000;
`;

const RulerSvg = styled.svg`
  display: block;
  overflow: visible;
`;

const LevelScaleSvg = styled.svg`
  display: block;
  overflow: visible;
`;

const SnapButtons = styled.div`
  margin-left: 12px;
  display: flex;
  align-self: flex-start;
  margin-top: -3px;
`;

const SnapButton = styled.div`
  width: 42px;
  height: 50px;
  background: #181818;
  border: 2px solid #2e2e2e;
  border-radius: 6px;
  display: flex;
  align-items: center;
  justify-content: center;
`;

const TrackFrame = styled.div`
  margin-left: 8px;
  width: 1250px;
  border: 2px solid #000;
  border-top: none;
  display: grid;
  grid-template-columns: 1100px 146px;
`;

const TrackMain = styled.div`
  position: relative;
  line-height: 0;
  height: 669px;
`;

const Hud = styled.div`
  position: absolute;
  left: 426px;
  top: 46px;
  width: 249px;
  height: 51px;
  background: rgba(42, 42, 42, 0.88);
  display: flex;
  align-items: center;
  gap: 9px;
  padding-right: 8px;
  line-height: normal;
`;

const HudGrip = styled.div`
  width: 18px;
  height: 100%;
  background: #5a5a5a;
  position: relative;
  &::after {
    content: "";
    position: absolute;
    left: 6px;
    top: 19px;
    width: 6px;
    height: 20px;
    background: repeating-linear-gradient(0deg, #b0b0b0 0 2px, transparent 2px 4px);
  }
`;

const HudValue = styled.span`
  color: #4e4e4e;
  font-size: 21px;
  width: 94px;
`;

const HudDivider = styled.div`
  width: 2px;
  height: 38px;
  background: #4a4a4a;
`;

const ScaleColumn = styled.div`
  display: flex;
  flex-direction: column;
  background: #232323;
`;

const ChannelScale = styled.div`
  height: ${(p) => p.$h}px;
  display: flex;
  align-items: flex-start;
  justify-content: space-between;
  padding-right: 6px;
  border-top: ${(p) => (p.$second ? "2px solid #000" : "none")};
  & > svg { margin-top: ${(p) => (p.$second ? -2 : 0)}px; }
`;

const ChannelButton = styled.div`
  align-self: center;
  width: 42px;
  height: 35px;
  background: #181818;
  border: 2px solid #2e2e2e;
  border-radius: 4px;
  color: ${BLUE};
  font-size: 18px;
  display: flex;
  align-items: center;
  justify-content: center;
`;

const TrackScrollbar = styled.div`
  grid-column: 1 / 3;
  height: 18px;
  background: #333;
  display: flex;
  align-items: center;
  padding-left: 608px;
`;

const ScrollGrip = styled.div`
  width: 48px;
  height: 8px;
  background: repeating-linear-gradient(90deg, #a0a0a0 0 1px, transparent 1px 3px);
`;

const ScrollUp = styled.div`
  margin-left: 534px;
  width: 0;
  height: 0;
  border-left: 6px solid transparent;
  border-right: 6px solid transparent;
  border-bottom: 7px solid #8a8a8a;
`;

const TransportBar = styled.div`
  flex: 1;
  display: flex;
  align-items: center;
  padding-left: 19px;
`;

const TimeDisplay = styled.span`
  width: 279px;
  font-size: 31px;
  color: #4c4c4c;
  margin-top: 8px;
`;

const SpeedLabel = styled.span`
  width: 43px;
  color: #8a8a8a;
  font-size: 24px;
`;

const TransportSlot = styled.div`
  width: 58px;
  display: flex;
  align-items: center;
  justify-content: center;
`;

const ZoomGroup = styled.div`
  margin-left: 40px;
  display: flex;
`;

const EssentialPanel = styled.section`
  flex: 1;
  background: #232323;
`;

const EssentialHead = styled.div`
  height: 58px;
  border-bottom: 3px solid #2b2b2b;
  padding-left: 24px;
  display: flex;
  align-items: center;
  gap: 22px;
`;

const EssentialNote = styled.div`
  height: 60px;
  border-bottom: 3px solid #2b2b2b;
  padding: 8px 0 0 21px;
  display: flex;
  align-items: center;
  font-style: italic;
  color: #868686;
`;

const PresetRow = styled.div`
  height: 72px;
  border-bottom: 3px solid #2b2b2b;
  padding: 0 0 2px 22px;
  display: flex;
  align-items: center;
`;

const PresetLabel = styled.span`
  width: 77px;
  color: #4a4a4a;
`;

const PresetSelect = styled.div`
  width: 499px;
  height: 40px;
  background: #2b2b2b;
  border-radius: 4px;
  display: flex;
  align-items: center;
  justify-content: flex-end;
  padding-right: 10px;
`;

const BottomRow = styled.div`
  height: 196px;
  display: flex;
  gap: 8px;
`;

const LevelsPanel = styled.section`
  width: 1333px;
  background: #232323;
  padding-left: 10px;
`;

const PanelTitle = styled.div`
  height: 66px;
  margin-left: ${(p) => p.$ml || 13}px;
  display: flex;
  align-items: center;
  gap: 22px;
  color: #b8b8b8;
  padding-bottom: 10px;
`;

const MeterBox = styled.div`
  width: 1312px;
  height: 90px;
  border: 2px solid #000;
  display: flex;
  gap: 2px;
  background: #000;
`;

const MeterChannels = styled.div`
  flex: 1;
  display: flex;
  flex-direction: column;
  gap: 2px;
`;

const MeterChannel = styled.div`
  position: relative;
  flex: 1;
  background: #1c1c1c;
`;

const MeterFill = styled.div`
  width: ${(p) => p.$w}px;
  height: 100%;
  background: #36f14c;
`;

const MeterPeak = styled.div`
  position: absolute;
  top: 0;
  left: 917px;
  width: 2px;
  height: 100%;
  background: #f3e12e;
`;

const ClipLights = styled.div`
  width: 16px;
  display: flex;
  flex-direction: column;
  gap: 2px;
`;

const ClipLight = styled.div`
  flex: 1;
  background: #1c1c1c;
`;

const SelectionPanel = styled.section`
  flex: 1;
  background: #232323;
`;

const SelectionGrid = styled.div`
  margin-left: 21px;
  margin-top: -9px;
  display: grid;
  grid-template-columns: 101px 144px 142px 1fr;
  grid-template-rows: 36px 42px 42px;
  align-items: center;
  color: #868686;
`;

const ColHead = styled.span``;

const RowHead = styled.span``;

const TimeValue = styled.span`
  padding-left: 3px;
  font-size: 21px;
  color: ${BLUE};
`;
